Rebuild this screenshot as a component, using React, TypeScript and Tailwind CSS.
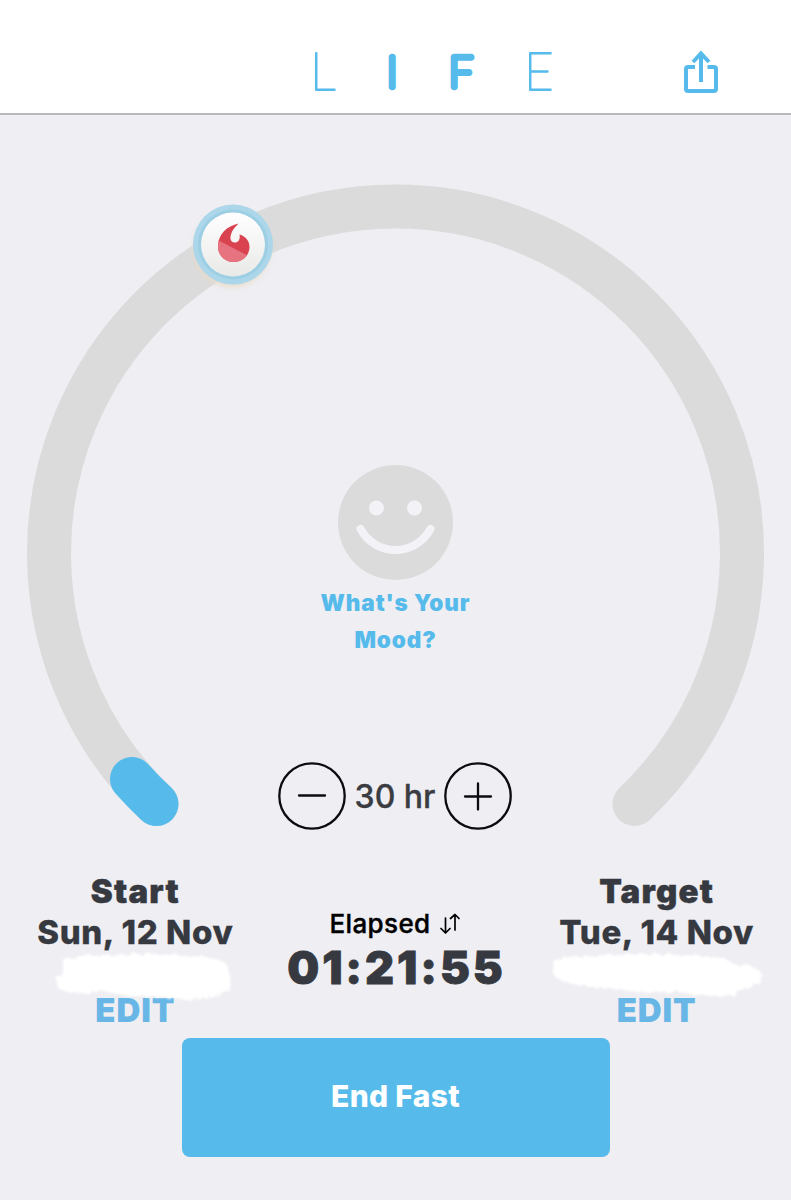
import type { ReactNode } from "react";

function Logo() {
  return (
    <svg
      viewBox="300 0 266 113"
      className="h-[113px] w-[266px] font-['Lato'] font-thin"
      fill="currentColor"
      stroke="currentColor"
      strokeLinejoin="round"
    >
      <text x="310" y="90" fontSize="51" strokeWidth="1.800">L</text>
      <text x="392" y="87" fontSize="42" strokeWidth="6.500" textAnchor="middle">I</text>
      <text x="449" y="87" fontSize="42" strokeWidth="6.500">F</text>
      <text x="524" y="90" fontSize="51" strokeWidth="1.800">E</text>
    </svg>
  );
}

function Header() {
  return (
    <header className="grid h-[115px] grid-cols-[300px_266px_225px] border-b-2 border-[#b9b8bb] bg-white text-[#56bbeb]">
      <div />
      <Logo />
      <button className="mt-[50px] ml-[117px] h-[44px] w-[36px]" aria-label="Share">
        <svg viewBox="0 0 36 44" className="h-full w-full" fill="none" stroke="currentColor" strokeWidth="4">
          <path d="M12 17H5Q3 17 3 19V39Q3 41 5 41H31Q33 41 33 39V19Q33 17 31 17H24.500" />
          <path d="M18 32V4M10 12l8-8.500L26 12" />
        </svg>
      </button>
    </header>
  );
}

function ProgressRing() {
  return (
    <svg viewBox="0 115 791 715" className="col-start-1 row-start-1 h-[715px] w-[791px]" fill="none">
      <defs>
        <linearGradient id="badge" x1="0" y1="0" x2="0" y2="1">
          <stop offset="0" stopColor="#ffffff" />
          <stop offset="1" stopColor="#e9e9e8" />
        </linearGradient>
        <filter id="badgeShadow" x="-30%" y="-30%" width="160%" height="160%">
          <feGaussianBlur stdDeviation="3" />
        </filter>
        <clipPath id="flameLower">
          <path d="M210 236L260 262V275H210Z" />
        </clipPath>
      </defs>
      <path d="M156.500 804A346.500 346.500 0 1 1 634.500 804" stroke="#dbdbdb" strokeWidth="44" strokeLinecap="round" />
      <path d="M132 779Q143.500 792 156.500 804" stroke="#56bbeb" strokeWidth="44" strokeLinecap="round" />

      <circle cx="232" cy="249" r="38" fill="#e8dcc8" filter="url(#badgeShadow)" />
      <circle cx="233" cy="244.500" r="40" fill="#acd6e9" />
      <circle cx="233" cy="244.500" r="35" fill="#9dcfe4" />
      <circle cx="233" cy="244.500" r="32" fill="url(#badge)" />
      <path
        d="M238.500 223.500C227 226 218 234 218 246.500C218 255.500 225 262 233.500 262C242.500 262 249.500 255.500 249.500 247C249.500 241 246 236.500 239.500 234.500C240.500 239 238.500 242.500 235 242.500C231 242.500 229.500 239 231 234.500C232 230.500 235 227 238.500 223.500Z"
        fill="#d9434f"
      />
      <path
        d="M238.500 223.500C227 226 218 234 218 246.500C218 255.500 225 262 233.500 262C242.500 262 249.500 255.500 249.500 247C249.500 241 246 236.500 239.500 234.500C240.500 239 238.500 242.500 235 242.500C231 242.500 229.500 239 231 234.500C232 230.500 235 227 238.500 223.500Z"
        fill="#e87380"
        clipPath="url(#flameLower)"
      />
    </svg>
  );
}

function Mood() {
  return (
    <button className="flex flex-col items-center">
      <svg viewBox="0 0 115 115" className="size-[115px]">
        <circle cx="57.500" cy="57.500" r="57.500" fill="#dbdbdb" />
        <circle cx="38.500" cy="43" r="7.500" fill="#f3f3f7" />
        <circle cx="76.500" cy="43" r="7.500" fill="#f3f3f7" />
        <path d="M22.500 64C38 92 77 92 92.500 64" fill="none" stroke="#f3f3f7" strokeWidth="8" strokeLinecap="round" />
      </svg>
      <span className="mt-1 w-[180px] text-center text-[22.5px] leading-[37px] font-black tracking-[0.9px] text-[#56bbeb]">
        What's Your Mood?
      </span>
    </button>
  );
}

function RoundButton({ label, children }: { label: string; children: ReactNode }) {
  return (
    <button className="size-[68px]" aria-label={label}>
      <svg viewBox="0 0 68 68" className="h-full w-full" fill="none" stroke="#0b0b12" strokeWidth="2.300" strokeLinecap="round">
        <circle cx="34" cy="34" r="32.700" />
        {children}
      </svg>
    </button>
  );
}

function GoalStepper() {
  return (
    <div className="mr-px flex w-[234px] items-center justify-between">
      <RoundButton label="Less">
        <path d="M21 33.500H47" />
      </RoundButton>
      <span className="pt-0.5 text-[32px] leading-10 font-medium whitespace-nowrap text-[#3a3c42] [-webkit-text-stroke:0.3px_#3a3c42]">
        30 hr
      </span>
      <RoundButton label="More">
        <path d="M21 34.500H47M34 21.500V47.500" />
      </RoundButton>
    </div>
  );
}

type DateColumnProps = {
  title: string;
  date: string;
  smudge: string;
};

function DateColumn({ title, date, smudge }: DateColumnProps) {
  return (
    <div className="relative flex flex-col items-center text-[33px] leading-[41px] text-[#36393f]">
      <h2 className="pl-px font-black tracking-[1.2px] [-webkit-text-stroke:0.4px_#36393f]">{title}</h2>
      <p className="pl-px font-extrabold tracking-[0.6px] whitespace-nowrap [-webkit-text-stroke:0.3px_#36393f]">{date}</p>
      <button className="mt-[37px] pl-px font-black tracking-[0.9px] text-[#68b6e6]">EDIT</button>
      <svg viewBox="0 0 260 60" className="absolute top-[77px] left-0 h-[60px] w-[260px]">
        <filter id="rough" x="-10%" y="-20%" width="120%" height="140%">
          <feTurbulence type="fractalNoise" baseFrequency="0.15" numOctaves="2" seed="4" />
          <feDisplacementMap in="SourceGraphic" scale="7" />
          <feGaussianBlur stdDeviation="1.3" />
        </filter>
        <path d={smudge} fill="#ffffff" filter="url(#rough)" />
      </svg>
    </div>
  );
}

function Elapsed() {
  return (
    <div className="flex flex-col items-center pt-[35px]">
      <button className="mr-0.5 flex items-center gap-[9px] text-[26px] leading-9 font-medium tracking-[0.4px] text-black [-webkit-text-stroke:0.4px_#000]">
        Elapsed
        <svg viewBox="0 0 20 22" className="h-[22px] w-5" fill="none" stroke="currentColor" strokeWidth="1.700" strokeLinecap="round" strokeLinejoin="round">
          <path d="M5.500 5V20M1 15.500L5.500 20L10 15.500" />
          <path d="M15 17V1.500M10.500 5.500L15 1.500L19 5.500" />
        </svg>
      </button>
      <p className="pl-0.5 text-[45px] leading-[52px] font-black tracking-[2.9px] text-[#36393f] [-webkit-text-stroke:0.8px_#36393f]">
        01:21:55
      </p>
    </div>
  );
}

export default function App() {
  return (
    <div className="h-[1200px] w-[791px] overflow-hidden bg-[#eeeef3] font-['Inter',sans-serif]">
      <Header />
      <main>
        <section className="grid">
          <ProgressRing />
          <div className="z-10 col-start-1 row-start-1 flex flex-col items-center justify-between pt-[350px]">
            <Mood />
            <GoalStepper />
          </div>
        </section>
        <section className="mx-auto grid w-[782px] grid-cols-3 pt-[41px]">
          <DateColumn
            title="Start"
            date="Sun, 12 Nov"
            smudge="M58 11Q80 6 104 7Q160 4 205 10Q226 12 225 27Q228 44 211 47Q185 57 168 49Q125 51 100 43Q72 49 54 41Q47 33 56 27Z"
          />
          <Elapsed />
          <DateColumn
            title="Target"
            date="Tue, 14 Nov"
            smudge="M33 11Q90 4 155 7Q200 7 211 17Q232 16 236 27Q237 37 219 40Q203 52 187 48Q165 47 153 44Q105 45 76 40Q50 38 31 31Q22 18 33 11Z"
          />
        </section>
        <button className="mx-auto mt-[7px] block h-[119px] w-[428px] rounded-[8px] bg-[#56bbeb] pb-[3px] text-[30px] leading-10 font-extrabold tracking-[0.3px] text-white">
          End Fast
        </button>
      </main>
    </div>
  );
}
